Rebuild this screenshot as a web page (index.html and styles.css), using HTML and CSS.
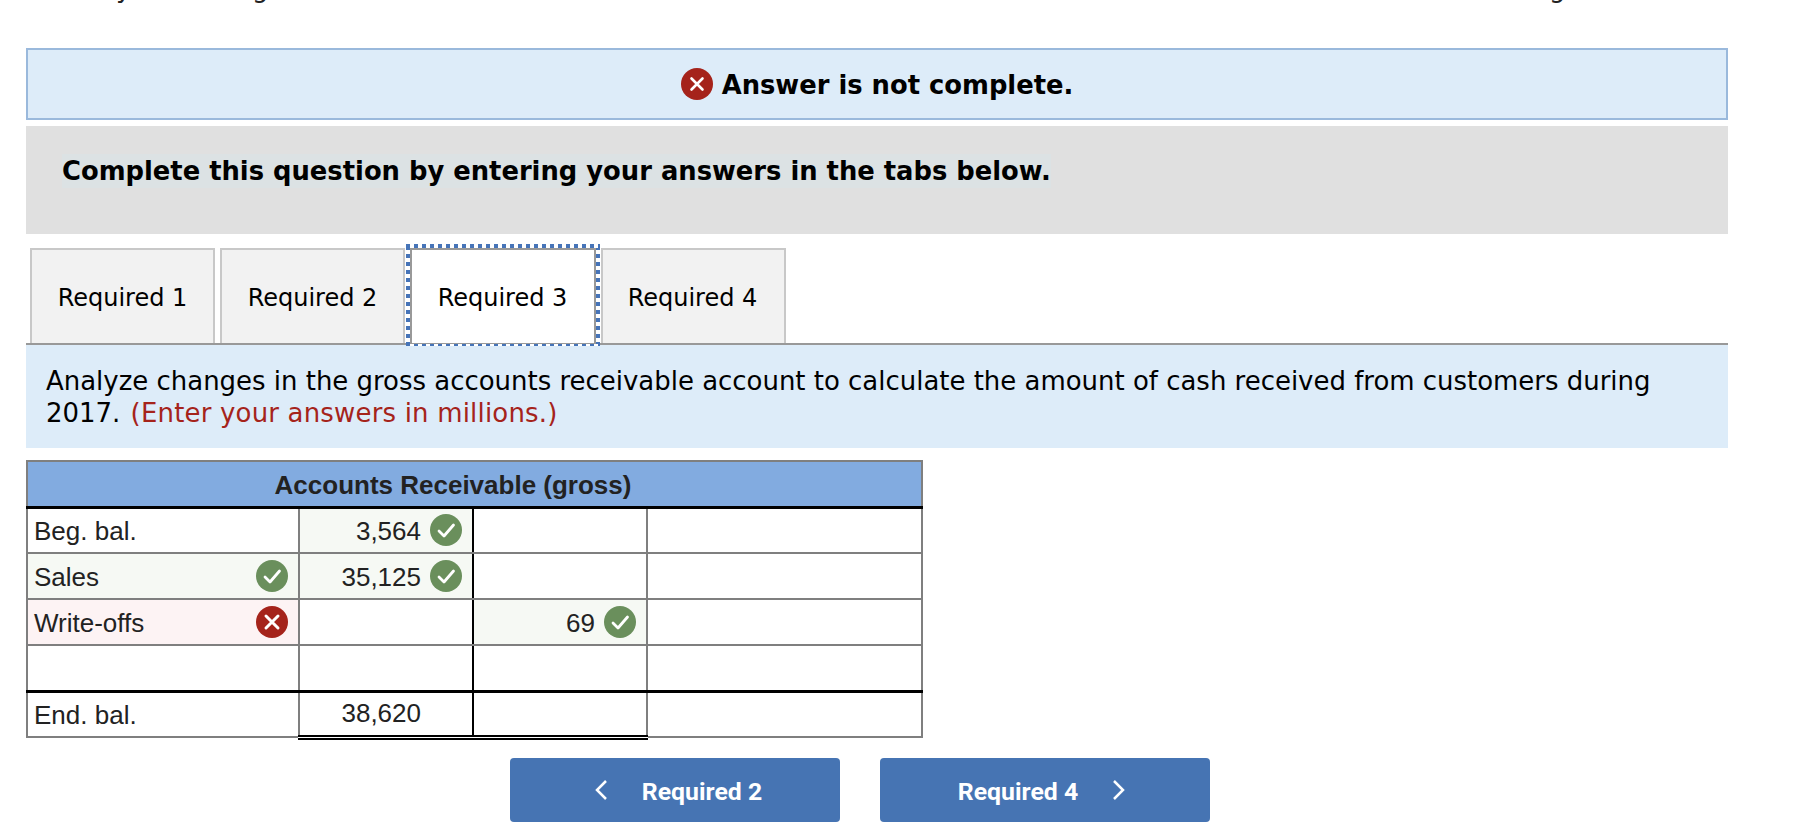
FILE: index.html
```html
<!DOCTYPE html>
<html lang="en">
<head>
<meta charset="utf-8">
<title>Answer is not complete</title>
<link rel="stylesheet" href="styles.css">
</head>
<body>
<div class="page">
  <div class="clipped-line" aria-hidden="true"><span class="d1">y</span><span class="d2">g</span><span class="d3">g</span></div>
  <div class="alert">
    <svg class="ic-x" viewBox="0 0 32 32"><circle cx="16" cy="16" r="16" fill="#a5231b"/><path d="M10.5 10.5l11 11M21.5 10.5l-11 11" stroke="#fff" stroke-width="2.6" stroke-linecap="round"/></svg>
    <strong class="alert-text">Answer is not complete.</strong>
  </div>
  <div class="instruct"><strong class="instruct-text">Complete this question by entering your answers in the tabs below.</strong></div>
  <div class="tabs">
    <div class="tab">Required 1</div>
    <div class="tab">Required 2</div>
    <div class="tab active">Required 3</div>
    <div class="tab narrow">Required 4</div>
  </div>
  <div class="prompt">Analyze changes in the gross accounts receivable account to calculate the amount of cash received from customers during 2017. <span class="red">(Enter your answers in millions.)</span></div>

  <table class="taccount">
    <colgroup><col class="c1"><col class="c2"><col class="c3"><col class="c4"></colgroup>
    <thead><tr><th colspan="4">Accounts Receivable (gross)</th></tr></thead>
    <tbody>
      <tr>
        <td class="lbl">Beg. bal.</td>
        <td class="num ok"><div class="cell"><span>3,564</span><svg class="ic" viewBox="0 0 32 32"><use href="#chk"/></svg></div></td>
        <td class="num"></td><td class="last"></td>
      </tr>
      <tr>
        <td class="lbl ok"><div class="cell between"><span>Sales</span><svg class="ic" viewBox="0 0 32 32"><use href="#chk"/></svg></div></td>
        <td class="num ok"><div class="cell"><span>35,125</span><svg class="ic" viewBox="0 0 32 32"><use href="#chk"/></svg></div></td>
        <td class="num"></td><td class="last"></td>
      </tr>
      <tr>
        <td class="lbl bad"><div class="cell between"><span>Write-offs</span><svg class="ic" viewBox="0 0 32 32"><use href="#crs"/></svg></div></td>
        <td class="num"></td>
        <td class="num ok"><div class="cell"><span>69</span><svg class="ic" viewBox="0 0 32 32"><use href="#chk"/></svg></div></td>
        <td class="last"></td>
      </tr>
      <tr class="blank"><td class="lbl"></td><td class="num"></td><td class="num"></td><td class="last"></td></tr>
      <tr class="end">
        <td class="lbl">End. bal.</td>
        <td class="num total"><div class="cell nudge"><span>38,620</span></div></td>
        <td class="num total"></td><td class="last"></td>
      </tr>
    </tbody>
  </table>

  <div class="nav">
    <a class="btn prev"><svg class="chev" viewBox="0 0 14 24"><path d="M12 3L3 12l9 9" /></svg><span>Required 2</span></a>
    <a class="btn next"><span>Required 4</span><svg class="chev" viewBox="0 0 14 24"><path d="M2 3l9 9-9 9" /></svg></a>
  </div>
</div>
<svg class="defs" width="0" height="0">
  <symbol id="chk" viewBox="0 0 32 32"><circle cx="16" cy="16" r="16" fill="#6a8f5c"/><path d="M9 17l5 5 9.5-11" fill="none" stroke="#fff" stroke-width="2.8" stroke-linecap="round" stroke-linejoin="round"/></symbol>
  <symbol id="crs" viewBox="0 0 32 32"><circle cx="16" cy="16" r="16" fill="#a5231b"/><path d="M10 10l12 12M22 10L10 22" stroke="#fff" stroke-width="3" stroke-linecap="round"/></symbol>
</svg>
</body>
</html>
```
FILE: styles.css
```css
* { box-sizing: border-box; }
html, body { margin: 0; padding: 0; background: #fff; }
body { font-family: "DejaVu Sans", Verdana, sans-serif; color: #000; overflow: hidden; }
.page { width: 1820px; height: 830px; padding-left: 26px; position: relative; }
.defs { position: absolute; }

.clipped-line { height: 48px; overflow: hidden; position: relative; font-size: 26px; line-height: 30px; color: #222; }
.clipped-line span { position: absolute; top: -27px; }
.d1 { left: 90px; }
.d2 { left: 226px; }
.d3 { left: 1523px; }

.alert { width: 1702px; height: 72px; background: #ddecf9; border: 2px solid #9ab9dc; display: flex; align-items: center; justify-content: center; gap: 9px; font-size: 25.8px; }
.alert-text { padding-top: 2px; }
.ic-x { width: 32px; height: 32px; flex: none; }

.instruct { width: 1702px; height: 108px; margin-top: 6px; background: #e0e0e0; padding: 28px 0 0 36px; font-size: 25.8px; }
.instruct-text { background: #dce2e4; line-height: 33px; padding-top: 1px; display: inline-block; }

.tabs { display: flex; width: 1702px; height: 111px; padding-left: 4px; align-items: flex-end; border-bottom: 2px solid #999; gap: 5px; }
.tab { width: 185px; height: 95px; background: #f2f2f2; border: 2px solid #c8c8c8; border-bottom: 0; font-size: 24px; display: flex; justify-content: center; padding-top: 34px; }
.tab.narrow { padding-right: 2px; }
.tab.active { width: 186px; padding-right: 1px; background: #fff; border: 2px solid #999; border-bottom: 0; position: relative; }
.tab.active::before { content: ""; position: absolute; inset: -6px -6px -3px -6px; pointer-events: none;
  background:
    repeating-linear-gradient(90deg, #4674b8 0 4px, #fff 4px 8px) top / 100% 4px no-repeat,
    repeating-linear-gradient(90deg, #4674b8 0 4px, #fff 4px 8px) bottom / 100% 2px no-repeat,
    repeating-linear-gradient(0deg, #4674b8 0 4px, #fff 4px 8px) left / 4px 100% no-repeat,
    repeating-linear-gradient(0deg, #4674b8 0 4px, #fff 4px 8px) right / 4px 100% no-repeat;
}

.prompt { width: 1702px; height: 103px; background: #ddecf9; padding: 20px 20px 0 20px; font-size: 25.96px; line-height: 32px; }
.red { color: #a5231b; margin-left: 2px; letter-spacing: .2px; }

.taccount { margin-top: 12px; width: 897px; height: 277px; table-layout: fixed; border-collapse: collapse; font-family: "Liberation Sans", Arial, sans-serif; font-size: 26px; color: #222; border: 2px solid #7f7f7f; }
.c1 { width: 272px; }
.c2, .c3 { width: 174px; }
.taccount th { height: 46px; background: #82abe0; border-bottom: 3px solid #000; font-weight: 700; padding: 4px 43px 0 0; }
.taccount td { height: 46px; padding: 2px 10px 0 8px; border: 2px solid #7f7f7f; }
.taccount td:first-child { border-left: 0; }
.taccount td.last { border-right: 0; }
.taccount td.num:nth-child(2) { border-right: 2px solid #000; }
.lbl { padding-left: 6px !important; }
.cell { display: flex; align-items: center; justify-content: flex-end; gap: 9px; margin-top: -1px; }
.cell span { padding-top: 1px; }
.cell .ic { margin-top: -1px; }
.cell.between { justify-content: space-between; }
.cell.nudge { padding: 0 41px 3px 0; }
.ic { width: 32px; height: 32px; flex: none; }
.ok { background: #f6f9f4; }
.bad { background: #fdf3f4; }
.taccount tr.end td { border-top: 3px solid #000; }
.taccount td.total { border-bottom: 5px double #000; }

.nav { display: flex; gap: 40px; margin: 18px 0 0 484px; }
.btn { width: 330px; height: 64px; background: #4674b3; border-radius: 4px; color: #fff; font-family: Roboto, sans-serif; font-weight: 700; font-size: 24.8px; display: flex; align-items: center; justify-content: center; gap: 34px; }
.btn span { padding-top: 3px; }
.btn.prev { padding-left: 6px; }
.btn.next { padding-right: 6px; }
.chev { width: 14px; height: 24px; fill: none; stroke: #fff; stroke-width: 2.5; }
```
